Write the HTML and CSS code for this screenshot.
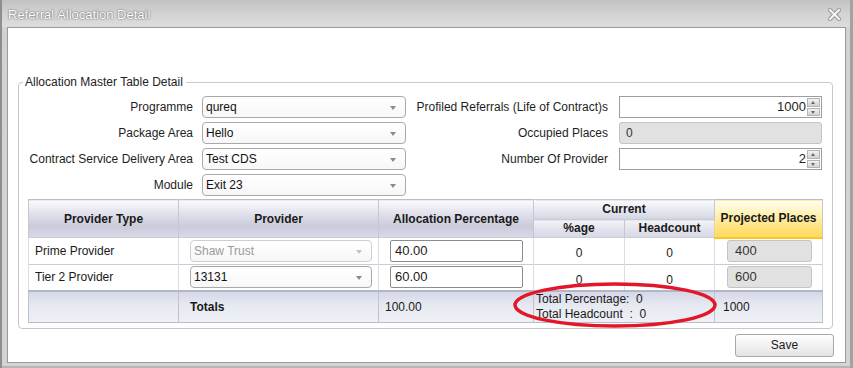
FILE: index.html
```html
<!DOCTYPE html>
<html>
<head>
<meta charset="utf-8">
<title>Referral Allocation Detail</title>
<link rel="stylesheet" href="styles.css">
</head>
<body>
<div class="dialog">
  <div class="titlebar">
    <span class="title">Referral Allocation Detail</span>
    <svg class="close" width="13" height="13" viewBox="0 0 13 13">
      <path d="M2 2 L11 11 M11 2 L2 11" stroke="#9a9a9a" stroke-width="4.2" stroke-linecap="square"/>
      <path d="M2 2 L11 11 M11 2 L2 11" stroke="#f6f6f6" stroke-width="2" stroke-linecap="square"/>
    </svg>
  </div>
  <div class="content">
    <fieldset class="master">
      <legend>Allocation Master Table Detail</legend>
      <div class="form">
        <label class="lbl">Programme</label>
        <div class="select">qureq<i class="arrow"></i></div>
        <label class="lbl lbl-r">Profiled Referrals (Life of Contract)s</label>
        <div class="spin"><span class="val">1000</span><span class="btns"><b class="up"></b><b class="down"></b></span></div>

        <label class="lbl">Package Area</label>
        <div class="select">Hello<i class="arrow"></i></div>
        <label class="lbl lbl-r">Occupied Places</label>
        <div class="readonly">0</div>

        <label class="lbl">Contract Service Delivery Area</label>
        <div class="select">Test CDS<i class="arrow"></i></div>
        <label class="lbl lbl-r">Number Of Provider</label>
        <div class="spin"><span class="val">2</span><span class="btns"><b class="up"></b><b class="down"></b></span></div>

        <label class="lbl">Module</label>
        <div class="select">Exit 23<i class="arrow"></i></div>
      </div>

      <div class="tablewrap">
        <table class="alloc">
          <colgroup>
            <col class="c1"><col class="c2"><col class="c3"><col class="c4"><col class="c5"><col class="c6">
          </colgroup>
          <thead>
            <tr class="h1">
              <th rowspan="2">Provider Type</th>
              <th rowspan="2">Provider</th>
              <th rowspan="2">Allocation Percentage</th>
              <th colspan="2" class="current">Current</th>
              <th rowspan="2" class="projected">Projected Places</th>
            </tr>
            <tr class="h2">
              <th class="sub">%age</th>
              <th class="sub">Headcount</th>
            </tr>
          </thead>
          <tbody>
            <tr>
              <td class="ptype">Prime Provider</td>
              <td class="pcell"><div class="select small disabled">Shaw Trust<i class="arrow"></i></div></td>
              <td class="pcell"><div class="textbox">40.00</div></td>
              <td class="num">0</td>
              <td class="num">0</td>
              <td class="projcell"><div class="readonly proj">400</div></td>
            </tr>
            <tr>
              <td class="ptype">Tier 2 Provider</td>
              <td class="pcell"><div class="select small">13131<i class="arrow"></i></div></td>
              <td class="pcell"><div class="textbox">60.00</div></td>
              <td class="num">0</td>
              <td class="num">0</td>
              <td class="projcell"><div class="readonly proj">600</div></td>
            </tr>
          </tbody>
          <tfoot>
            <tr>
              <td></td>
              <td class="tot-label">Totals</td>
              <td class="tot-alloc">100.00</td>
              <td colspan="2" class="tot-current">Total Percentage:&nbsp; 0<br>Total Headcount&nbsp; :&nbsp; 0</td>
              <td class="tot-proj">1000</td>
            </tr>
          </tfoot>
        </table>
        <svg class="ring" width="214" height="52" viewBox="0 0 214 52">
          <ellipse cx="107" cy="26" rx="100" ry="21" fill="none" stroke="#e3162a" stroke-width="3.5"/>
        </svg>
      </div>
    </fieldset>
    <div class="actions">
      <button class="btn" type="button">Save</button>
    </div>
  </div>
</div>
</body>
</html>
```

FILE: styles.css
```css
html, body {
  margin: 0;
  padding: 0;
}

body {
  background: #9d9d9d;
  font-family: "Liberation Sans", Arial, sans-serif;
  font-size: 12px;
  color: #1e1e1e;
}

.dialog {
  box-sizing: border-box;
  width: 853px;
  height: 368px;
  padding: 0 7px 5px 7px;
  background: linear-gradient(#c2c2c2, #d3d3d3 14px, #dcdcdc 26px, #d2d2d2 28px, #d4d4d4);
  box-shadow: inset 2px 0 #8e8e8e, inset -3px 0 #a2a2a2, inset 0 -2px #b5b5b5;
  display: flex;
  flex-direction: column;
}

.titlebar {
  height: 27px;
  display: flex;
  align-items: center;
  justify-content: space-between;
  margin: 0 -7px 0 -7px;
  padding: 0 12px 0 8px;
}

.title {
  color: #ffffff;
  font-size: 13px;
  text-shadow: 0 0 2px #6a6a6a, 0 0 1px #6a6a6a;
  margin-top: 1px;
}

.close {
  display: block;
  margin-top: 1px;
}

.content {
  flex: 1;
  background: #ffffff;
  border: 1px solid #9a9a9a;
  display: flex;
  flex-direction: column;
}

.master {
  margin: 47px 12px 0 10px;
  padding: 7px 10px 5px 9px;
  border: 1px solid #c8c8c8;
  border-radius: 4px;
  min-width: 0;
}

.master legend {
  padding: 0 3px 0 2px;
  margin-left: -5px;
  font-size: 12px;
  color: #222;
}

.form {
  display: grid;
  grid-template-columns: 174px 204px 213px 203px;
  grid-auto-rows: 22px;
  row-gap: 4px;
  align-items: center;
}

.lbl {
  text-align: right;
  padding-right: 9px;
  white-space: nowrap;
}

.lbl-r {
  padding-right: 11px;
}

.select {
  position: relative;
  box-sizing: border-box;
  height: 22px;
  line-height: 20px;
  padding-left: 3px;
  border: 1px solid #a9a9a9;
  border-radius: 4px;
  background: linear-gradient(#ffffff, #f7f7f7);
  color: #111;
}

.select .arrow {
  position: absolute;
  right: 9px;
  top: 9px;
  width: 0;
  height: 0;
  border-left: 3px solid transparent;
  border-right: 3px solid transparent;
  border-top: 4px solid #8a8a8a;
}

.select.disabled {
  color: #9a9a9a;
  border-color: #cfcfcf;
}

.select.disabled .arrow {
  border-top-color: #c4c4c4;
}

.spin {
  box-sizing: border-box;
  height: 22px;
  border: 1px solid #9d9d9d;
  display: flex;
  align-items: stretch;
  background: #fff;
}

.spin .val {
  flex: 1;
  text-align: right;
  line-height: 20px;
  padding-right: 1px;
  font-size: 13px;
}

.spin .btns {
  width: 13px;
  display: flex;
  flex-direction: column;
  gap: 1px;
  padding: 1px 1px 1px 0;
}

.spin b {
  flex: 1;
  position: relative;
  background: linear-gradient(#f2f2f2, #d2d2d2);
  border: 1px solid #b4b4b4;
}

.spin b::after {
  content: "";
  position: absolute;
  left: 3px;
  top: 2px;
  border-left: 2px solid transparent;
  border-right: 2px solid transparent;
}

.spin b.up::after {
  border-bottom: 3px solid #6a6a6a;
}

.spin b.down::after {
  border-top: 3px solid #6a6a6a;
}

.readonly {
  box-sizing: border-box;
  height: 22px;
  line-height: 20px;
  padding-left: 6px;
  border: 1px solid #c4c4c4;
  border-radius: 3px;
  background: #e1e1e1;
  color: #333;
}

.tablewrap {
  position: relative;
  margin-top: 3px;
}

.alloc {
  width: 794px;
  table-layout: fixed;
  border-collapse: collapse;
  border: 1px solid #b9bccb;
}

.alloc .c1 { width: 150px; }
.alloc .c2 { width: 200px; }
.alloc .c3 { width: 155px; }
.alloc .c4 { width: 91px; }
.alloc .c5 { width: 90px; }
.alloc .c6 { width: 108px; }

.alloc th {
  font-weight: bold;
  font-size: 12px;
  color: #1a1a1a;
  padding: 0;
  text-align: center;
  border-left: 1px solid #c5c7d3;
  border-right: 1px solid #c5c7d3;
  background: linear-gradient(#fbfbfd, #e4e5ee 30%, #c9cbda 70%, #d8dae6);
}

.alloc .h1 th {
  height: 19px;
}

.alloc .h2 th {
  height: 17px;
}

.alloc th.current {
  border-top: 1px solid #c5c7d3;
  border-radius: 3px 3px 0 0;
  background: linear-gradient(#fbfbfd, #e7e8f0 50%, #d2d4e1);
  line-height: 17px;
}

.alloc th.sub {
  line-height: 17px;
  background: linear-gradient(#f3f4f8, #e2e3ec 50%, #d6d8e4);
  border-top: 1px solid #c8cad6;
}

.alloc th.projected {
  background: linear-gradient(#fffdf0, #fff2b8 35%, #ffe27a 75%, #ffd95a);
  border-bottom: 2px solid #f5c92a;
  border-left: 1px solid #e9d68a;
}

.alloc tbody td {
  height: 25px;
  padding: 0;
  border-top: 1px solid #c9cbd8;
  border-left: 1px solid #dadce6;
  border-right: 1px solid #dadce6;
  background: #ffffff;
  color: #1a1a1a;
}

.alloc td.ptype {
  padding-left: 6px;
}

.alloc td.pcell {
  padding-left: 11px;
}

.alloc tbody td.num {
  text-align: center;
  padding-top: 5px;
  height: 20px;
}

.alloc td.projcell {
  padding-left: 12px;
}

.select.small {
  width: 182px;
  height: 22px;
}

.textbox {
  box-sizing: border-box;
  width: 133px;
  height: 22px;
  line-height: 20px;
  padding-left: 4px;
  border: 1px solid #8c8c8c;
  border-radius: 2px;
  background: #fff;
  font-size: 13px;
}

.readonly.proj {
  width: 85px;
  font-size: 13px;
  padding-left: 7px;
}

.alloc tfoot td {
  height: 29px;
  padding: 0;
  border-top: 2px solid #b3b6c8;
  border-left: 1px solid #bfc2d0;
  border-right: 1px solid #bfc2d0;
  background: linear-gradient(#d4d7e6, #e7e9f1 45%, #eef0f6);
  color: #1a1a1a;
  vertical-align: middle;
}

.alloc td.tot-label {
  font-weight: bold;
  padding-left: 11px;
}

.alloc td.tot-alloc {
  padding-left: 6px;
}

.alloc td.tot-current {
  padding-left: 2px;
  line-height: 15px;
  font-size: 12px;
}

.alloc td.tot-proj {
  padding-left: 8px;
}

.ring {
  position: absolute;
  left: 480px;
  top: 80px;
  overflow: visible;
}

.actions {
  display: flex;
  justify-content: flex-end;
  padding: 5px 11px 0 0;
}

.btn {
  box-sizing: border-box;
  width: 99px;
  height: 23px;
  border: 1px solid #a8a8a8;
  border-radius: 3px;
  background: linear-gradient(#ffffff, #f1f1f1 50%, #e3e3e3);
  font-family: "Liberation Sans", Arial, sans-serif;
  font-size: 12px;
  color: #1a1a1a;
  padding: 0;
}
```
